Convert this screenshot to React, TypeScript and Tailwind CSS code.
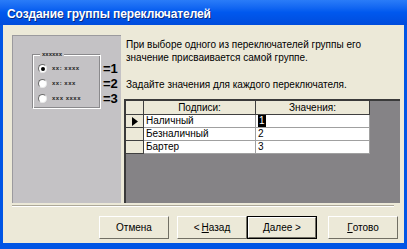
import React from 'react';

const rows = [
  { label: 'Наличный', value: '1', current: true },
  { label: 'Безналичный', value: '2', current: false },
  { label: 'Бартер', value: '3', current: false },
];

const radios = ['xx: xxxx', 'xx: xxx', 'xxx xxxx'];

function Radio({ checked }: { checked: boolean }) {
  return (
    <div className="w-[9px] h-[9px] rounded-full bg-white border border-t-[#6b6b6b] border-l-[#6b6b6b] border-r-[#e8e8e8] border-b-[#e8e8e8] flex items-center justify-center">
      {checked && <div className="w-[4px] h-[4px] rounded-full bg-black" />}
    </div>
  );
}

function WizButton({ children, isDefault }: { children: React.ReactNode; isDefault?: boolean }) {
  return (
    <button
      className={`w-[70px] h-[23px] bg-[#ECE9D8] text-[10px] text-black flex items-center justify-center border ${
        isDefault
          ? 'border-black'
          : 'border-t-white border-l-white border-r-[#716F64] border-b-[#716F64]'
      }`}
    >
      <span
        className={`w-full h-full flex items-center justify-center ${
          isDefault ? 'border border-t-white border-l-white border-r-[#716F64] border-b-[#716F64]' : ''
        }`}
      >
        {children}
      </span>
    </button>
  );
}

export default function App() {
  return (
    <div
      className="w-[407px] h-[249px] flex flex-col bg-[#0055E5] overflow-hidden"
      style={{ fontFamily: '"Liberation Sans", Arial, sans-serif' }}
    >
      {/* Title bar */}
      <div className="h-[25px] flex items-center pl-[7px] pt-[2px] bg-gradient-to-b from-[#2a7cf8] via-[#0058EE] to-[#004CDC]">
        <span className="text-white font-bold text-[12px] tracking-[-0.1px] [text-shadow:1px_1px_0_#0a2a80]">
          Создание группы переключателей
        </span>
      </div>

      {/* Client area */}
      <div className="flex-1 mx-[3px] mb-[6px] bg-[#ECE9D8] flex flex-col">
        <div className="flex pl-[9px] pr-[4px] pt-[10px]">
          {/* Picture panel */}
          <div className="w-[109px] h-[168px] bg-[#C4C2C5] border-t border-l border-[#9b9a9e] flex pl-[19px] pt-[18px]">
            <div className="flex items-start">
              <div className="relative w-[69px] h-[55px] border border-t-[#8a898c] border-l-[#8a898c] border-r-white border-b-white shadow-[inset_1px_1px_0_white,inset_-1px_-1px_0_#8a898c] pt-[6px] pl-[5px]">
                <span className="absolute -top-[6px] left-[7px] px-[2px] bg-[#C4C2C5] text-[6px] leading-[10px] font-bold text-[#222]">
                  xxxxxx
                </span>
                {radios.map((r, i) => (
                  <div key={r} className="h-[15px] flex items-center gap-[5px]">
                    <Radio checked={i === 0} />
                    <span className="text-[6px] font-bold text-[#222] tracking-[0.5px]">{r}</span>
                  </div>
                ))}
              </div>
              <div className="pt-[7px] pl-[2px]">
                {['=1', '=2', '=3'].map((t) => (
                  <div key={t} className="h-[15px] flex items-center text-[13px] font-bold text-black leading-none">
                    {t}
                  </div>
                ))}
              </div>
            </div>
          </div>

          {/* Right side */}
          <div className="flex-1 flex flex-col ml-[3px]">
            <div className="pl-[2px] pt-[3px] text-[10px] leading-[13px] text-black whitespace-nowrap">
              <div>При выборе одного из переключателей группы его</div>
              <div>значение присваивается самой группе.</div>
              <div className="mt-[14px]">Задайте значения для каждого переключателя.</div>
            </div>

            {/* Datasheet */}
            <div className="mt-[8px] flex-1 bg-[#858386] border-t-2 border-l-2 border-t-[#3a3a3a] border-l-[#3a3a3a] text-[10px] text-black">
              <div className="grid grid-cols-[18px_112px_114px] w-fit">
                <div className="h-[14px] bg-[#ECE9D8] border-r border-b border-[#404040]" />
                <div className="h-[14px] bg-[#ECE9D8] border-r border-b border-[#404040] flex items-center justify-center leading-none">
                  Подписи:
                </div>
                <div className="h-[14px] bg-[#ECE9D8] border-r border-b border-[#404040] flex items-center justify-center leading-none">
                  Значения:
                </div>
                {rows.map((row) => (
                  <React.Fragment key={row.label}>
                    <div className="h-[13px] bg-[#ECE9D8] border-r border-b border-[#404040] flex items-center justify-center">
                      {row.current && (
                        <svg width="6" height="9" viewBox="0 0 6 9">
                          <path d="M0 0 L6 4.5 L0 9 Z" fill="black" />
                        </svg>
                      )}
                    </div>
                    <div className="h-[13px] bg-white border-r border-b border-[#a0a0a0] flex items-center pl-[2px] leading-none">
                      {row.label}
                    </div>
                    <div className="h-[13px] bg-white border-r border-b border-[#a0a0a0] flex items-center pl-[2px] leading-none">
                      {row.current ? (
                        <span className="h-full bg-black text-white flex items-center px-[1px]">{row.value}</span>
                      ) : (
                        row.value
                      )}
                    </div>
                  </React.Fragment>
                ))}
              </div>
            </div>
          </div>
        </div>

        {/* Separator */}
        <div className="mt-[2px] ml-[9px] mr-[10px] h-[2px] border-t border-b border-t-[#ACA899] border-b-white" />

        {/* Buttons */}
        <div className="mt-[9px] flex justify-end pr-[6px]">
          <WizButton>Отмена</WizButton>
          <div className="w-[8px]" />
          <WizButton>
            &lt; <span className="underline ml-[2px]">Н</span>азад
          </WizButton>
          <WizButton isDefault>
            <span className="underline">Д</span>алее &gt;
          </WizButton>
          <div className="w-[11px]" />
          <WizButton>
            <span className="underline">Г</span>отово
          </WizButton>
        </div>
      </div>
    </div>
  );
}
